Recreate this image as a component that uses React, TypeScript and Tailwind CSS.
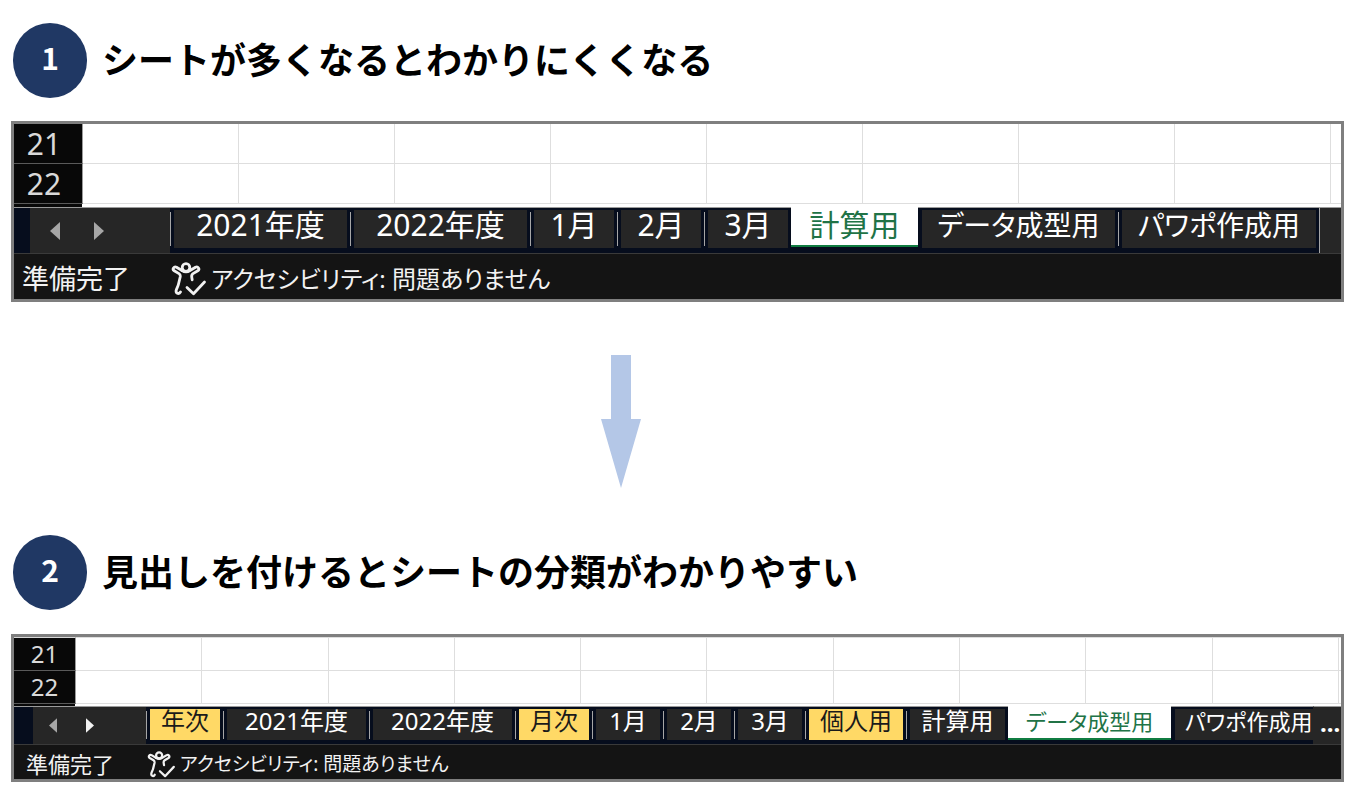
import clsx from 'clsx';

interface Sheet {
  name: string;
  width: string;
  kind?: 'active' | 'heading';
  noDivider?: boolean;
  long?: boolean;
  clipped?: boolean;
}

interface PanelProps {
  label: string;
  columns: number;
  sheets: Sheet[];
  compact?: boolean;
}

const manySheets: Sheet[] = [
  { name: '2021年度', width: 'w-[180px]' },
  { name: '2022年度', width: 'w-[180px]' },
  { name: '1月', width: 'w-[87px]' },
  { name: '2月', width: 'w-[87px]' },
  { name: '3月', width: 'w-[87px]' },
  { name: '計算用', width: 'w-[127px]', kind: 'active' },
  { name: 'データ成型用', width: 'w-[200px]', noDivider: true, long: true },
  { name: 'パワポ作成用', width: 'w-[201px]', long: true },
];

const groupedSheets: Sheet[] = [
  { name: '年次', width: 'w-[77px]', kind: 'heading' },
  { name: '2021年度', width: 'w-[146px]' },
  { name: '2022年度', width: 'w-[146px]' },
  { name: '月次', width: 'w-[77px]', kind: 'heading' },
  { name: '1月', width: 'w-[71px]' },
  { name: '2月', width: 'w-[71px]' },
  { name: '3月', width: 'w-[71px]' },
  { name: '個人用', width: 'w-[101px]', kind: 'heading' },
  { name: '計算用', width: 'w-[102px]' },
  { name: 'データ成型用', width: 'w-[163px]', kind: 'active', long: true },
  { name: 'パワポ作成用', width: 'w-[142px]', noDivider: true, long: true, clipped: true },
];

function StepTitle({ step, children }: { step: number; children: string }) {
  return (
    <div className="flex items-center gap-[15px] pl-0.5 font-['Noto_Sans_CJK_JP',sans-serif]">
      <span className="flex h-[75px] w-[74px] shrink-0 items-center justify-center rounded-full bg-[#203864] pb-2 text-3xl font-bold text-white">
        {step}
      </span>
      <h2 className="pb-1.5 text-4xl font-bold text-black">{children}</h2>
    </div>
  );
}

function AccessibilityIcon({ className }: { className: string }) {
  return (
    <svg
      viewBox="0 0 36 34"
      className={className}
      fill="none"
      stroke="currentColor"
      strokeWidth="2.8"
      strokeLinecap="round"
      strokeLinejoin="round"
      aria-hidden="true"
    >
      <circle cx="15" cy="5.5" r="3.8" />
      <path d="M11 8.5 5.5 5.2C3 4 .8 7.2 3.2 8.8L8 11.6c1.3.8 1.5 1.7 1.2 3.4L7.4 22.5c-.4 2-2 4-2.3 6.2-.3 3 3.2 3.8 4.4 1.2" />
      <path d="M11 8.5c2.5 1.6 5.5 1.6 8 0l5.5-3.3c2.5-1.2 4.7 2 2.3 3.6L22 11.6c-1.4.9-1.6 2-1.2 3.8l.4 2.4" />
      <path d="M16 25.5l6.5 6.2L33.5 20" />
    </svg>
  );
}

function SheetTab({ sheet, compact }: { sheet: Sheet; compact?: boolean }) {
  const text = clsx(
    'whitespace-nowrap',
    compact ? 'leading-6' : 'leading-[30px]',
    compact && (sheet.long ? 'text-[22px]' : 'text-2xl'),
    !compact && (sheet.long ? 'text-[28px]' : 'text-3xl'),
  );

  if (sheet.kind === 'active') {
    return (
      <button
        type="button"
        role="tab"
        aria-selected="true"
        className={clsx(
          'flex shrink-0 items-start justify-center border-b-2 border-[#107c41] bg-white pt-[3px] text-[#217346]',
          sheet.width,
          compact ? 'h-[34px]' : 'h-[40px]',
        )}
      >
        <span className={text}>{sheet.name}</span>
      </button>
    );
  }

  return (
    <div className={clsx('flex shrink-0 border-t border-[#9b9b9b] pt-0.5', sheet.width)}>
      <span
        className={clsx(
          'mt-0.5 w-px shrink-0',
          compact ? 'h-7' : 'h-[34px]',
          !sheet.noDivider && 'bg-[#a6a6a6]',
        )}
      />
      <button
        type="button"
        role="tab"
        aria-selected="false"
        className={clsx(
          'ml-[3px] flex flex-1 items-start',
          compact ? 'h-[31px]' : 'h-[38px]',
          sheet.clipped ? 'justify-start pl-2.5' : 'mr-[3px] justify-center',
          sheet.kind === 'heading' ? 'bg-[#ffd966] text-[#1a1a1a]' : 'bg-[#262626] text-white',
        )}
      >
        <span className={text}>{sheet.name}</span>
      </button>
    </div>
  );
}

function ExcelPanel({ label, columns, sheets, compact }: PanelProps) {
  const cells = Array.from({ length: columns }, (_, i) => i);

  return (
    <section aria-label={label} className="overflow-hidden border-[3px] border-[#7f7f7f] bg-white">
      <table className="w-full table-fixed border-separate border-spacing-0">
        <colgroup>
          <col className={compact ? 'w-[62px]' : 'w-[69px]'} />
          {cells.map((i) => (
            <col key={i} />
          ))}
          <col className={compact ? 'w-0.5' : 'w-2.5'} />
        </colgroup>
        <tbody>
          {[21, 22].map((row) => (
            <tr key={row} className={clsx(compact ? (row === 21 ? 'h-[34px]' : 'h-[33px]') : 'h-10')}>
              <th
                scope="row"
                className={clsx(
                  'border-r border-b border-r-[#9b9b9b] border-b-[#5a5a5a] bg-[#080808] p-0 font-normal text-[#d9d9d9]',
                  compact ? 'text-2xl leading-8' : 'pr-2 text-3xl leading-[39px]',
                  compact && row === 21 && 'border-t',
                )}
              >
                {row}
              </th>
              {cells.map((i) => (
                <td
                  key={i}
                  className={clsx('border-r border-b border-[#dedede] p-0', compact && row === 21 && 'border-t')}
                />
              ))}
              <td className={clsx('border-b border-[#dedede] p-0', compact && row === 21 && 'border-t')} />
            </tr>
          ))}
        </tbody>
      </table>
      <div className={clsx('flex', compact ? 'h-0.5' : 'h-[3px]')}>
        <div className={clsx('bg-[#080808]', compact ? 'w-[61px]' : 'w-[68px]')} />
      </div>

      <div className={clsx('flex bg-[#262626]', compact ? 'h-[38px]' : 'h-[46px]')}>
        <div
          className={clsx('shrink-0 border-t border-[#9b9b9b] bg-[#060d1d]', compact ? 'w-[19px]' : 'w-4')}
        />
        <div
          className={clsx(
            'flex shrink-0 items-center border-t border-[#9b9b9b]',
            compact ? 'w-[113px] gap-[29px] pl-4' : 'w-[140px] gap-[34px] pl-5',
          )}
        >
          <button type="button" aria-label="前のシート">
            <svg viewBox="0 0 10 18" className={compact ? 'h-[15px] w-2' : 'h-[18px] w-2.5'} aria-hidden="true">
              <path d="M10 0v18L0 9z" fill="#a6a6a6" />
            </svg>
          </button>
          <button type="button" aria-label="次のシート">
            <svg viewBox="0 0 10 18" className={compact ? 'h-[15px] w-2' : 'h-[18px] w-2.5'} aria-hidden="true">
              <path d="M0 0v18l10-9z" fill={compact ? '#f2f2f2' : '#a6a6a6'} />
            </svg>
          </button>
        </div>
        <div role="tablist" className="flex min-w-0 bg-[#060d1d]">
          {sheets.map((sheet) => (
            <SheetTab key={sheet.name} sheet={sheet} compact={compact} />
          ))}
        </div>
        <div
          className={clsx(
            'flex-1 border-t border-l border-t-[#9b9b9b] text-white',
            compact ? 'border-l-[#262626] pl-1.5' : 'border-l-[#a6a6a6]',
          )}
        >
          {compact && <span className="text-2xl leading-8 font-bold">...</span>}
        </div>
      </div>

      <div
        className={clsx(
          'flex items-center border-t border-[#3a3a3a] bg-[#141414] whitespace-nowrap text-[#f2f2f2]',
          compact ? 'h-[35px] pt-1 pl-3 leading-7' : 'h-[46px] pt-1 pl-2 leading-9',
        )}
      >
        <span className={compact ? 'w-[121px] text-[22px]' : 'w-[149px] text-[27px]'}>準備完了</span>
        <AccessibilityIcon className={compact ? 'h-[27px] w-[29px]' : 'h-[34px] w-9'} />
        <span className={compact ? 'pl-1 text-[19px]' : 'pl-1 text-2xl'}>
          アクセシビリティ: 問題ありません
        </span>
      </div>
    </section>
  );
}

export default function App() {
  return (
    <main
      lang="ja"
      className="bg-white pt-[23px] pr-3.5 pb-2.5 pl-[11px] font-['Noto_Sans','Noto_Sans_CJK_JP',sans-serif]"
    >
      <StepTitle step={1}>シートが多くなるとわかりにくくなる</StepTitle>
      <div className="mt-[23px] [font-feature-settings:'palt']">
        <ExcelPanel label="見出しなしのシート" columns={8} sheets={manySheets} />
      </div>

      <div className="flex justify-center pt-[53px] pr-[113px] pb-[47px]">
        <svg viewBox="0 0 40 133" className="h-[133px] w-10" aria-hidden="true">
          <path d="M10 0h20v64h10L20 133 0 64h10z" fill="#b4c7e7" />
        </svg>
      </div>

      <StepTitle step={2}>見出しを付けるとシートの分類がわかりやすい</StepTitle>
      <div className="mt-6 [font-feature-settings:'palt']">
        <ExcelPanel label="見出しありのシート" columns={10} sheets={groupedSheets} compact />
      </div>
    </main>
  );
}
